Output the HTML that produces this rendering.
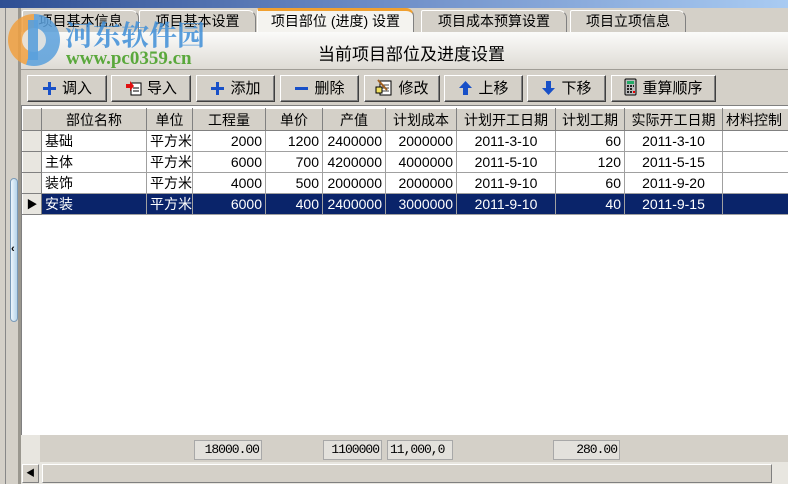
<!DOCTYPE html>
<html><head><meta charset="utf-8"><style>
*{margin:0;padding:0;box-sizing:border-box}
body{width:788px;height:484px;overflow:hidden;background:#d4d0c8;position:relative;font-family:"Liberation Sans","Noto Sans CJK SC",sans-serif;font-size:14px;color:#000}
.abs{position:absolute}
.top{left:0;top:0;width:788px;height:8px;background:linear-gradient(90deg,#2f4f93,#6f8fc8 50%,#a9cbf2)}
.tab{position:absolute;top:10px;height:22px;border:1px solid #fff;border-right:1px solid #808080;border-bottom:none;background:#d4d0c8;text-align:center;line-height:21px;font-size:14px;border-radius:2px 8px 0 0}
.tab.act{top:8px;height:24px;background:#f4f3ef;border-top:3px solid #f0a030;line-height:20px}
.strip{left:21px;top:32px;width:767px;height:38px;background:linear-gradient(#fbfbfa,#dedbd5);border-bottom:1px solid #a09d96}
.btn{position:absolute;top:75px;height:27px;background:#d4d0c8;border:1px solid;border-color:#fff #404040 #404040 #fff;box-shadow:inset -1px -1px 0 #808080;font-size:15px;line-height:25px;text-align:center}
.btn svg{vertical-align:-3px;margin-right:5px}
.grid{left:21px;top:105px;width:767px;height:330px;background:#fff;border-top:1px solid #808080;border-left:1px solid #808080;overflow:hidden}
table{border-collapse:collapse;position:absolute;left:0;top:2px;table-layout:fixed;width:771px}
td{height:21px;border:1px solid #a0a0a0;font-size:14px;padding:0 3px;white-space:nowrap;overflow:hidden}
tr.h td{background:#d4d0c8;text-align:center;border-color:#fff #808080 #808080 #fff;height:22px}
td.i{background:#e8e6e0;border-color:#fff #808080 #808080 #fff}
td.r{text-align:right}td.c{text-align:center}
tr.s td{background:#0a246a;color:#fff}
tr.s td.i{background:#e8e6e0;color:#000}
.foot{left:21px;top:435px;width:767px;height:27px;background:#d4d0c8}
.fb{position:absolute;top:5px;height:20px;border:1px solid #a8a8a8;background:#e3e1dc;font-family:"Liberation Mono",monospace;font-size:13px;line-height:18px;text-align:right;padding-right:2px;letter-spacing:-1px}
.sb{left:21px;top:462px;width:767px;height:22px;background:#e8e6e0}
</style></head><body>
<div class="abs top"></div>
<div class="abs" style="left:0;top:8px;width:6px;height:476px;background:#d4d0c8;border-right:1px solid #888"></div>
<div class="abs" style="left:18px;top:8px;width:3px;height:476px;background:#9a978f"></div>
<div class="abs" style="left:10px;top:178px;width:8px;height:144px;background:linear-gradient(90deg,#eef6fc,#b6d4ea);border:1px solid #7a9ab8;border-radius:4px"></div>
<div class="abs" style="left:11px;top:243px;font-size:11px;font-weight:bold">‹</div>

<div class="tab" style="left:22px;width:117px">项目基本信息</div>
<div class="tab" style="left:139px;width:117px">项目基本设置</div>
<div class="tab" style="left:421px;width:146px">项目成本预算设置</div>
<div class="tab" style="left:570px;width:116px">项目立项信息</div>
<div class="abs strip"></div>
<div class="tab act" style="left:257px;width:157px">项目部位 (进度) 设置</div>
<div class="abs" style="left:318px;top:40px;font-size:17px">当前项目部位及进度设置</div>

<div class="btn" style="left:27px;width:80px"><svg width="15" height="15"><path d="M6 1h3v5h5v3H9v5H6V9H1V6h5z" fill="#1850c8"/></svg>调入</div>
<div class="btn" style="left:111px;width:80px"><svg width="17" height="16"><rect x="6" y="3" width="10" height="12" fill="#fff" stroke="#000"/><path d="M8 8h6M8 11h6" stroke="#000"/><path d="M1 4h4V1l4 5-4 5V8H1z" fill="#e01010"/></svg>导入</div>
<div class="btn" style="left:196px;width:79px"><svg width="15" height="15"><path d="M6 1h3v5h5v3H9v5H6V9H1V6h5z" fill="#1850c8"/></svg>添加</div>
<div class="btn" style="left:280px;width:79px"><svg width="15" height="15"><rect x="1" y="6" width="13" height="3" fill="#1850c8"/></svg>删除</div>
<div class="btn" style="left:364px;width:76px"><svg width="18" height="17"><rect x="5" y="2" width="11" height="14" fill="#fff" stroke="#000"/><path d="M7 6h7M7 9h7M7 12h7" stroke="#444"/><rect x="1" y="8" width="6" height="6" fill="#f0e060" stroke="#000"/><path d="M3 1l9 10" stroke="#a06020" stroke-width="2"/></svg>修改</div>
<div class="btn" style="left:444px;width:79px"><svg width="15" height="16"><path d="M7.5 1L14 8H10v7H5V8H1z" fill="#1850c8"/></svg>上移</div>
<div class="btn" style="left:527px;width:79px"><svg width="15" height="16"><path d="M7.5 15L14 8H10V1H5v7H1z" fill="#1850c8"/></svg>下移</div>
<div class="btn" style="left:611px;width:105px"><svg width="13" height="18"><rect x="1" y="1" width="11" height="16" rx="1" fill="#bbb" stroke="#000"/><rect x="3" y="3" width="7" height="3" fill="#2a6"/><path d="M3 8h2M6 8h2M9 8h1M3 11h2M6 11h2M3 14h2M6 14h2" stroke="#222" stroke-width="2"/><rect x="9" y="13" width="2" height="2" fill="#e00"/></svg>重算顺序</div>

<div class="abs grid">
<table>
<colgroup><col style="width:19px"><col style="width:105px"><col style="width:46px"><col style="width:73px"><col style="width:57px"><col style="width:63px"><col style="width:71px"><col style="width:99px"><col style="width:69px"><col style="width:98px"><col style="width:71px"></colgroup>
<tr class="h"><td class="i"></td><td>部位名称</td><td>单位</td><td>工程量</td><td>单价</td><td>产值</td><td>计划成本</td><td>计划开工日期</td><td>计划工期</td><td>实际开工日期</td><td style="text-align:left">材料控制</td></tr>
<tr><td class="i"></td><td>基础</td><td>平方米</td><td class="r">2000</td><td class="r">1200</td><td class="r">2400000</td><td class="r">2000000</td><td class="c">2011-3-10</td><td class="r">60</td><td class="c">2011-3-10</td><td></td></tr>
<tr><td class="i"></td><td>主体</td><td>平方米</td><td class="r">6000</td><td class="r">700</td><td class="r">4200000</td><td class="r">4000000</td><td class="c">2011-5-10</td><td class="r">120</td><td class="c">2011-5-15</td><td></td></tr>
<tr><td class="i"></td><td>装饰</td><td>平方米</td><td class="r">4000</td><td class="r">500</td><td class="r">2000000</td><td class="r">2000000</td><td class="c">2011-9-10</td><td class="r">60</td><td class="c">2011-9-20</td><td></td></tr>
<tr class="s"><td class="i" style="font-size:11px;text-align:center">▶</td><td>安装</td><td>平方米</td><td class="r">6000</td><td class="r">400</td><td class="r">2400000</td><td class="r">3000000</td><td class="c">2011-9-10</td><td class="r">40</td><td class="c">2011-9-15</td><td></td></tr>
</table>
</div>
<div class="abs foot">
<div class="abs" style="left:0;top:0;width:19px;height:27px;background:#e8e6e0"></div>
<div class="fb" style="left:173px;width:68px">18000.00</div>
<div class="fb" style="left:302px;width:59px">1100000</div>
<div class="fb" style="left:366px;width:66px;text-align:left;padding-left:2px">11,000,0</div>
<div class="fb" style="left:532px;width:67px">280.00</div>
</div>
<div class="abs sb">
<div class="abs" style="left:1px;top:2px;width:17px;height:19px;background:#d4d0c8;border:1px solid;border-color:#fff #808080 #808080 #fff;font-size:9px;text-align:center;line-height:17px">◀</div>
<div class="abs" style="left:21px;top:2px;width:730px;height:19px;background:#d4d0c8;border:1px solid;border-color:#fff #808080 #808080 #fff"></div>
</div>

<!-- watermark -->
<div class="abs" style="left:8px;top:14px;width:52px;height:52px;border-radius:50%;background:conic-gradient(#5aa0dc 0 55%,#f0a040 55% 100%);opacity:.85"></div>
<div class="abs" style="left:22px;top:28px;width:24px;height:24px;border-radius:50%;background:#e8e6e0;opacity:.9"></div>
<div class="abs" style="left:28px;top:20px;width:10px;height:40px;background:#5aa0dc;opacity:.9"></div>
<div class="abs" style="left:65px;top:14px;font-size:28px;font-weight:bold;color:#3f8fd8;opacity:.85;font-family:'Noto Serif CJK SC',serif">河东软件园</div>
<div class="abs" style="left:66px;top:48px;font-size:19px;font-weight:bold;color:#5aa83c;font-family:'Liberation Serif',serif">www.pc0359.cn</div>
</body></html>
